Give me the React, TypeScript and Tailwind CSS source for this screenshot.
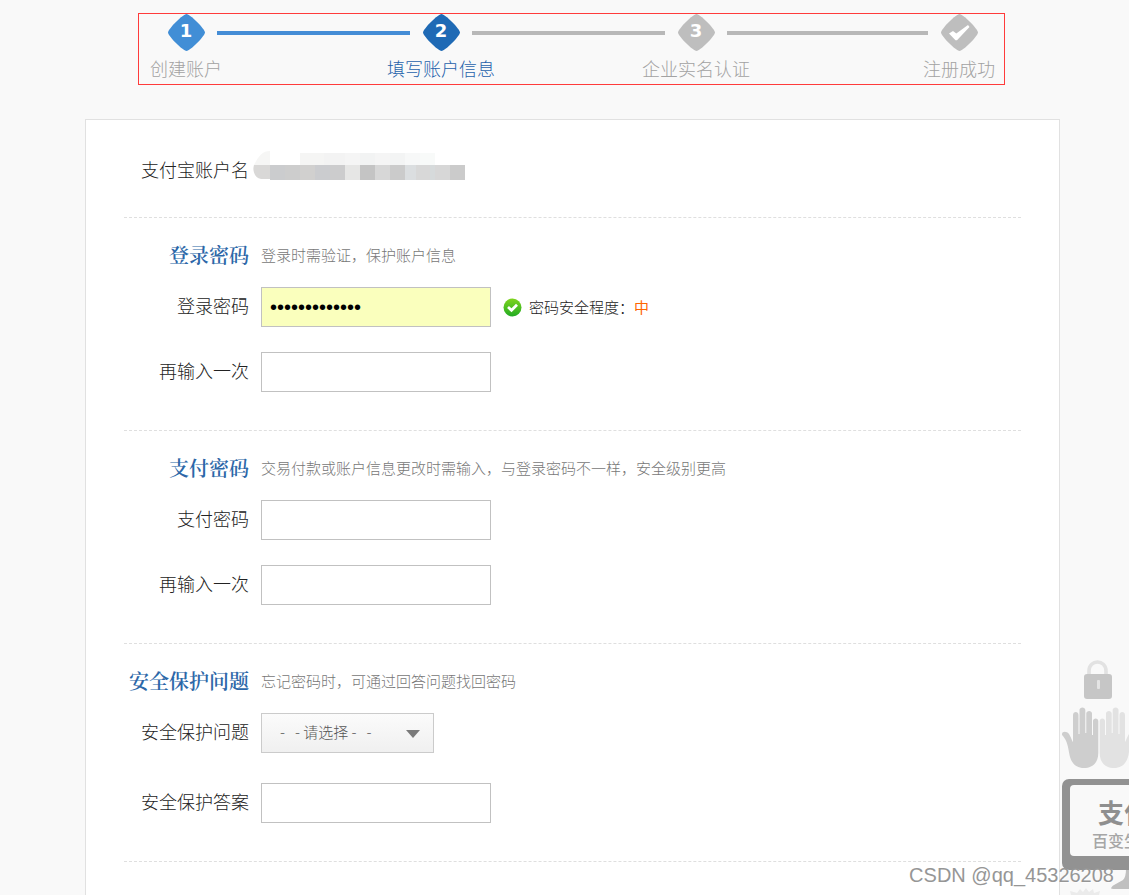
import React from 'react';

const DIAMOND =
  'M18.5 0C22 0 37 15 37 18.5C37 22 22 37 18.5 37C15 37 0 22 0 18.5C0 15 15 0 18.5 0Z';

type StepProps = {
  label: string;
  fill: string;
  textClass: string;
  mark?: string;
};

function Step({ label, fill, textClass, mark }: StepProps) {
  return (
    <li className="flex w-[62px] shrink-0 flex-col items-center">
      <svg width="37" height="37" viewBox="0 0 37 37" role="img" aria-label={label}>
        <path d={DIAMOND} fill={fill} />
        {mark ? (
          <text
            x="18"
            y="23"
            textAnchor="middle"
            fill="#fff"
            className="font-['DejaVu_Sans'] text-[18px] font-bold"
          >
            {mark}
          </text>
        ) : (
          <path d="M8 19.5L12 17L15.300 19.500L27 11L28.500 13L16 26.300L14.500 26.300Z" fill="#fff" />
        )}
      </svg>
      <span className={`mt-[5px] whitespace-nowrap text-[18px] leading-6 font-light ${textClass}`}>
        {label}
      </span>
    </li>
  );
}

function Section({
  title,
  hint,
  children,
}: {
  title: string;
  hint: string;
  children: React.ReactNode;
}) {
  return (
    <section className="border-b border-dashed border-[#dfdfdf] pt-[23px] pb-[38px]">
      <div className="mb-[18px] flex items-center gap-3">
        <h2 className="w-[125px] shrink-0 whitespace-nowrap text-right font-['Noto_Serif_CJK_SC','Noto_Sans_CJK_SC',serif] text-xl leading-7 font-semibold text-[#2c67a8]">
          {title}
        </h2>
        <p className="text-[15px] leading-7 font-light text-[#777]">{hint}</p>
      </div>
      {children}
    </section>
  );
}

function Field({
  id,
  label,
  children,
}: {
  id: string;
  label: string;
  children: React.ReactNode;
}) {
  return (
    <div className="flex items-center gap-3">
      <label
        htmlFor={id}
        className="w-[125px] shrink-0 pb-1 whitespace-nowrap text-right text-[18px] font-light text-[#222]"
      >
        {label}
      </label>
      {children}
    </div>
  );
}

function TextBox({
  id,
  type = 'password',
  value,
  filled = false,
}: {
  id: string;
  type?: string;
  value?: string;
  filled?: boolean;
}) {
  return (
    <input
      id={id}
      type={type}
      defaultValue={value}
      className={`h-10 w-[230px] border border-[#c1c1c1] px-2 font-['Liberation_Sans',sans-serif] text-xl text-black outline-none ${
        filled ? 'bg-[#faffbd]' : 'bg-white'
      }`}
    />
  );
}

function MaskedName() {
  const low: [number, number, string][] = [
    [17, 15, '#cbccce'],
    [32, 15, '#cdcdcd'],
    [47, 15, '#d1d0cf'],
    [62, 15, '#cbcccf'],
    [77, 15, '#cccccd'],
    [92, 15, '#e6e6e5'],
    [107, 15, '#c4c4c4'],
    [122, 15, '#d7d7d7'],
    [137, 15, '#cbcbcb'],
    [152, 11, '#dbdee0'],
    [163, 14, '#d8d8d8'],
    [177, 5, '#d6dadb'],
    [182, 15, '#d7d7d7'],
    [197, 15, '#cbcbcb'],
  ];
  const high: [number, number, string][] = [
    [47, 24, '#f5f5f4'],
    [71, 21, '#f3f3f3'],
    [92, 15, '#f5f5f5'],
    [107, 15, '#f2f3f3'],
    [122, 15, '#f5f5f5'],
    [137, 15, '#f3f4f4'],
    [152, 15, '#f7f8f8'],
    [167, 15, '#f8faf9'],
  ];
  return (
    <svg width="212" height="30" viewBox="0 0 212 30" aria-hidden="true">
      <path d="M1 14C6 4 10 0 17 0V14Z" fill="#f6f6f5" />
      <path d="M1 14H17V28H8C2 27 -1 20 1 14Z" fill="#d9d8d7" />
      {high.map(([x, w, c]) => (
        <rect key={x} x={x} y="2" width={w} height="12" fill={c} />
      ))}
      {low.map(([x, w, c]) => (
        <rect key={x} x={x} y="14" width={w} height="15" fill={c} />
      ))}
    </svg>
  );
}

const HAND =
  'M1 27C1 24 6 24 8 27C10 30 11 34 12 35V8C12 4 17.500 4 17.500 8V27H18.500V3C18.500 -0.500 24.300 -0.500 24.300 3V26H25.300V6.500C25.300 3 31 3 31 6.500V28H32V14C32 10.500 37.300 10.500 37.300 14V46C37.300 56 31 61 23 61C14 61 10 55 8.500 48C7 39 6 34 2 29C1 28 1 28 1 27Z';

function SideArt() {
  return (
    <svg
      className="absolute top-[655px] right-0"
      width="69"
      height="240"
      viewBox="0 0 69 240"
      aria-hidden="true"
    >
      <path d="M29 21V16C29 4 46 4 46 16V21" fill="none" stroke="#e2e2e2" strokeWidth="3.600" />
      <rect x="24" y="19" width="28" height="25" rx="3" fill="#c6c6c6" />
      <rect x="37" y="25" width="3" height="9" rx="1" fill="#e4e4e4" />
      <path d={HAND} transform="translate(1 52)" fill="#cecece" />
      <path d={HAND} transform="translate(77 52) scale(-1 1)" fill="#e2e2e2" />
      <path d="M66 214H80V234H53C50 234 51 232 54 230L63 225C65 223 66 219 66 214Z" fill="#c0c0c0" />
      <rect x="2" y="124" width="100" height="91" rx="7" fill="#929292" />
      <rect x="10" y="130" width="80" height="71" rx="4" fill="#f9f9f9" />
      <text
        x="38"
        y="168"
        fill="#8f8f8f"
        className="font-['Noto_Sans_CJK_SC',sans-serif] text-[26px] font-bold"
      >
        支付
      </text>
      <text
        x="32"
        y="192"
        fill="#a6a6a6"
        className="font-['Noto_Sans_CJK_SC',sans-serif] text-[16px] font-medium"
      >
        百变生
      </text>
      <path d="M11 240L10 236L17 238L20 234L23 237L26 233L29 237L33 234L34 238L40 236L39 240Z" fill="#ebebeb" />
    </svg>
  );
}

export default function App() {
  return (
    <div className="relative flex min-h-screen flex-col overflow-hidden bg-[#f9f9f9] pt-[13px] pr-[69px] pl-[85px] font-['Noto_Sans_CJK_SC','Liberation_Sans',sans-serif]">
      <ol className="mr-[55px] ml-[53px] flex border border-[#ff3b3b] pr-[14px] pb-1 pl-4">
        <Step label="创建账户" mark="1" fill="#418ed6" textClass="text-[#a2a2a2]" />
        <li aria-hidden="true" className="mt-[17px] h-1 flex-[193] bg-[#458dd6]" />
        <Step label="填写账户信息" mark="2" fill="#1f6ab5" textClass="text-[#1f62ab]" />
        <li aria-hidden="true" className="mt-[17px] h-1 flex-[193] bg-[#b8b8b8]" />
        <Step label="企业实名认证" mark="3" fill="#bebebe" textClass="text-[#a2a2a2]" />
        <li aria-hidden="true" className="mt-[17px] h-1 flex-[201] bg-[#b8b8b8]" />
        <Step label="注册成功" fill="#bebebe" textClass="text-[#a2a2a2]" />
      </ol>

      <main className="mt-[34px] flex-1 border border-b-0 border-[#e1e1e1] bg-white px-[38px]">
        <form>
          <div className="flex items-start gap-1 border-b border-dashed border-[#dfdfdf] pt-[31px] pb-[34px]">
            <span className="w-[125px] shrink-0 pt-1 text-right text-[18px] leading-7 font-light whitespace-nowrap text-[#222]">
              支付宝账户名
            </span>
            <MaskedName />
          </div>

          <Section title="登录密码" hint="登录时需验证，保护账户信息">
            <div className="flex flex-col gap-[25px]">
              <Field id="login-password" label="登录密码">
                <TextBox id="login-password" value="abcdefg123456" filled />
                <span className="flex items-center gap-[7px] text-[15px] font-light text-[#222]">
                  <svg width="19" height="19" viewBox="0 0 19 19" aria-hidden="true">
                    <defs>
                      <linearGradient id="ok" x1="0" y1="0" x2="0" y2="1">
                        <stop offset="0" stopColor="#7fd41e" />
                        <stop offset="1" stopColor="#21ab23" />
                      </linearGradient>
                    </defs>
                    <circle cx="9.500" cy="9.500" r="9" fill="url(#ok)" />
                    <path d="M5 9L8.500 12.200L14 6.800" fill="none" stroke="#fff" strokeWidth="2.800" />
                  </svg>
                  <span>
                    密码安全程度：<span className="font-normal text-[#ff6600]">中</span>
                  </span>
                </span>
              </Field>
              <Field id="login-repeat" label="再输入一次">
                <TextBox id="login-repeat" />
              </Field>
            </div>
          </Section>

          <Section title="支付密码" hint="交易付款或账户信息更改时需输入，与登录密码不一样，安全级别更高">
            <div className="flex flex-col gap-[25px]">
              <Field id="pay-password" label="支付密码">
                <TextBox id="pay-password" />
              </Field>
              <Field id="pay-repeat" label="再输入一次">
                <TextBox id="pay-repeat" />
              </Field>
            </div>
          </Section>

          <Section title="安全保护问题" hint="忘记密码时，可通过回答问题找回密码">
            <div className="flex flex-col gap-[30px]">
              <Field id="question" label="安全保护问题">
                <div className="relative">
                  <select
                    id="question"
                    className="block h-10 w-[173px] appearance-none border border-[#cbcbcb] bg-linear-to-b from-[#fbfbfb] to-[#f0f0f0] pb-0.5 pl-[18px] text-[15px] font-light text-[#555] outline-none"
                  >
                    <option>-&nbsp;&nbsp; -&nbsp;请选择&nbsp;-&nbsp;&nbsp; -</option>
                  </select>
                  <svg
                    className="pointer-events-none absolute top-4 right-[14px]"
                    width="14"
                    height="9"
                    viewBox="0 0 14 9"
                    aria-hidden="true"
                  >
                    <path d="M0 1H14L7 9Z" fill="#7a7a7a" />
                  </svg>
                </div>
              </Field>
              <Field id="answer" label="安全保护答案">
                <TextBox id="answer" type="text" />
              </Field>
            </div>
          </Section>
        </form>
      </main>

      <SideArt />
      <span className="absolute top-[863px] right-[15px] font-['Liberation_Sans',sans-serif] text-xl leading-6 whitespace-nowrap text-[#969696] [text-shadow:1px_1px_0_#ffffffb0]">
        CSDN @qq_45326208
      </span>
    </div>
  );
}
